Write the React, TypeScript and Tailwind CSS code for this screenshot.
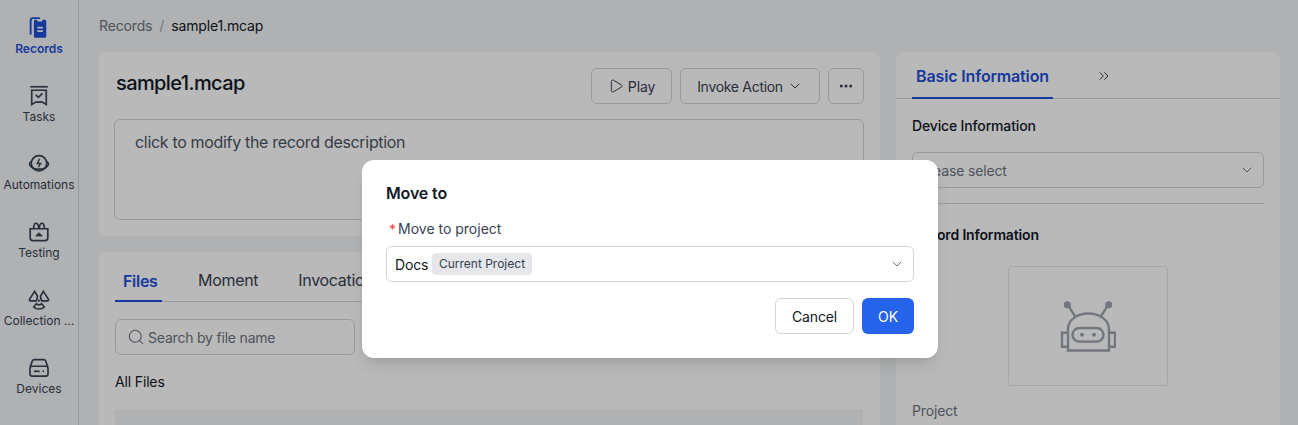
import React from "react";
import { ChevronDown, ChevronsRight, Ellipsis, Play, Search } from "lucide-react";

function RecordsIcon() {
  return (
    <svg width="22" height="22" viewBox="0 0 20 20" fill="none">
      <path d="M2.4 16V3C2.4 1.8 3.2 1 4.4 1H11" stroke="#1d4ed8" strokeWidth="1.7" />
      <path
        d="M5.4 4C5.4 3.2 6 2.6 6.8 2.6H8L8.8 4.2H12.6L13.4 2.6H15C15.9 2.6 16.6 3.2 16.6 4V17.4C16.6 18.2 16 18.8 15.2 18.8H6.8C6 18.8 5.4 18.2 5.4 17.4V4Z"
        fill="#1d4ed8"
      />
      <path d="M8.4 9.6H13.6M8.4 12.8H13.6" stroke="#f3f4f6" strokeWidth="1.5" />
    </svg>
  );
}

function TasksIcon() {
  return (
    <svg width="22" height="22" viewBox="0 0 20 20" fill="none" stroke="#374151" strokeWidth="1.5">
      <path d="M2 1.6H18" />
      <path d="M3.4 4.8H16.6V17.8L13 15.6H7L3.4 17.8V4.8Z" />
      <path d="M7 9L9.4 11.2L13.2 7.6" />
    </svg>
  );
}

function AutomationsIcon() {
  return (
    <svg width="22" height="22" viewBox="0 0 20 20" fill="none" stroke="#374151" strokeWidth="1.5">
      <circle cx="10" cy="9.4" r="7" />
      <path d="M3.4 7.4C1.2 9 0.8 10.6 2.4 12C5.4 15.6 14.6 15.6 17.6 12C19.2 10.6 18.8 9 16.6 7.4" />
      <path d="M10.6 5.2L8.4 9.6H11.4L9.4 12.8" strokeWidth="1.3" />
    </svg>
  );
}

function TestingIcon() {
  return (
    <svg width="22" height="22" viewBox="0 0 20 20" fill="none" stroke="#374151" strokeWidth="1.5">
      <path d="M2 7H18V15.4C18 16.8 17 17.8 15.6 17.8H4.4C3 17.8 2 16.8 2 15.4V7Z" />
      <path d="M5 7L5.6 3.6C5.8 2.6 6.4 2 7.2 2C8 2 8.8 2.6 9.2 3.6L10 7" />
      <path d="M10 7L10.8 3.6C11.2 2.6 12 2 12.8 2C13.6 2 14.2 2.6 14.4 3.6L15 7" />
      <path d="M7 13.6H13L10 10.6L7 13.6Z" fill="#374151" strokeWidth="0.8" />
    </svg>
  );
}

function CollectionIcon() {
  return (
    <svg width="22" height="22" viewBox="0 0 20 20" fill="none" stroke="#374151" strokeWidth="1.5">
      <path d="M6 2.2L1.4 9.4C1.2 10.2 1.6 10.8 2.4 10.8H7.6C8.4 9.2 8.6 8.2 8.6 6.4L6 2.2Z" />
      <path d="M14 2.2L18.6 9.4C18.8 10.2 18.4 10.8 17.6 10.8H12.4C11.6 9.2 11.4 8.2 11.4 6.4L14 2.2Z" />
      <path d="M7.6 13.4C9 14.6 11 14.6 12.4 13.4L14.8 16.4C12 18.6 8 18.6 5.2 16.4L7.6 13.4Z" />
      <circle cx="10" cy="10.6" r="1" fill="#374151" stroke="none" />
    </svg>
  );
}

function DevicesIcon() {
  return (
    <svg width="22" height="22" viewBox="0 0 20 20" fill="none" stroke="#374151" strokeWidth="1.5">
      <path d="M2 9L4 3.4C4.3 2.8 4.8 2.4 5.6 2.4H14.4C15.2 2.4 15.7 2.8 16 3.4L18 9" />
      <rect x="1.8" y="8.4" width="16.4" height="9" rx="2" />
      <path d="M5.4 13H10.6" />
      <path d="M13.2 13H14.6" />
    </svg>
  );
}

function RobotIcon() {
  return (
    <svg width="56" height="56" viewBox="0 0 56 56" fill="none" stroke="#9ca3af" strokeWidth="2.4">
      <circle cx="7.3" cy="6.7" r="3.5" fill="#9ca3af" stroke="none" />
      <circle cx="48.7" cy="6.7" r="3.5" fill="#9ca3af" stroke="none" />
      <path d="M8 7L15.7 19.3M48 7L40.3 19.3" />
      <path d="M8 52.5V31C8 22 17 15.5 28.3 15.5C39.6 15.5 49 22 49 31V52.5H8Z" />
      <rect x="12.5" y="30" width="31" height="13.6" rx="6.8" />
      <circle cx="22" cy="36.8" r="2" fill="#9ca3af" stroke="none" />
      <circle cx="34" cy="36.8" r="2" fill="#9ca3af" stroke="none" />
      <path d="M8 34.8H2V48.7H8M49 34.8H55V48.7H49" />
    </svg>
  );
}

const navItems = [
  { label: "Records", icon: <RecordsIcon />, active: true },
  { label: "Tasks", icon: <TasksIcon /> },
  { label: "Automations", icon: <AutomationsIcon /> },
  { label: "Testing", icon: <TestingIcon /> },
  { label: "Collection ...", icon: <CollectionIcon /> },
  { label: "Devices", icon: <DevicesIcon /> },
];

export default function App() {
  return (
    <div className="relative flex h-screen overflow-hidden bg-[#f3f4f6] font-['Inter',sans-serif] text-[14px] tracking-[-0.15px] text-[#111827]">
      <aside className="flex w-[79px] shrink-0 flex-col items-center border-r border-[#d1d5db] pt-[17px] tracking-normal">
        {navItems.map((item) => (
          <div key={item.label} className="flex h-[68px] w-full flex-col items-center">
            {item.icon}
            <span
              className={`mt-[2px] whitespace-nowrap text-[12px] leading-[16px] ${
                item.active ? "font-semibold text-[#1d4ed8]" : "text-[#374151]"
              }`}
            >
              {item.label}
            </span>
          </div>
        ))}
      </aside>

      <main className="flex-1 pl-5 pr-[18px]">
        <div className="flex h-[52px] items-center gap-[7px] pb-[1px] text-[14px]">
          <span className="text-[#6b7280]">Records</span>
          <span className="text-[#9ca3af]">/</span>
          <span className="text-[#111827]">sample1.mcap</span>
        </div>

        <div className="grid grid-cols-[781px_384px] gap-4">
          <div className="flex flex-col gap-4">
            <section className="h-[184px] rounded-lg bg-white pl-[15px] pr-4 pt-4">
              <div className="flex h-9 items-center justify-between">
                <h1 className="mb-[6px] pl-[2px] text-[20px] font-medium tracking-[-0.6px]">sample1.mcap</h1>
                <div className="flex gap-2">
                  <button className="flex h-9 w-[81px] items-center justify-center gap-1 rounded-md border border-[#d1d5db] text-[#374151]">
                    <Play size={16} strokeWidth={1.5} />
                    Play
                  </button>
                  <button className="flex h-9 w-[140px] items-center justify-center gap-1 rounded-md border border-[#d1d5db] tracking-[-0.3px] text-[#374151]">
                    Invoke Action
                    <ChevronDown size={16} strokeWidth={1.5} />
                  </button>
                  <button className="flex h-9 w-9 items-center justify-center rounded-md border border-[#d1d5db] text-[#374151]">
                    <Ellipsis size={16} strokeWidth={2.5} />
                  </button>
                </div>
              </div>
              <div className="mt-[15px] h-[101px] rounded-md border border-[#d1d5db] px-5 pt-[10px] text-[16px] leading-6 tracking-[-0.32px] text-[#4b5563]">
                click to modify the record description
              </div>
            </section>

            <section className="h-[300px] rounded-lg bg-white px-4">
              <div className="flex h-[50px] items-end border-b border-[#d1d5db] text-[16px] tracking-[-0.3px]">
                <div className="-mb-px w-[47px] border-b-2 border-[#1d4ed8] pb-[7px] pl-2 font-semibold text-[#1d4ed8]">Files</div>
                <div className="-mb-px ml-[36px] pb-[10px] text-[#374151]">Moment</div>
                <div className="-mb-px ml-10 pb-[10px] text-[#374151]">Invocation</div>
              </div>
              <div className="mt-[17px] flex h-9 w-60 items-center gap-[3px] rounded-md border border-[#d1d5db] pl-[11px] text-[#6b7280]">
                <Search size={18} strokeWidth={1.4} />
                <span className="tracking-[-0.2px] text-[#6b7280]">Search by file name</span>
              </div>
              <div className="mt-[17px] leading-5">All Files</div>
              <div className="mr-px mt-[17px] h-12 bg-[#f3f4f6]" />
            </section>
          </div>

          <section className="h-[400px] rounded-lg bg-white">
            <div className="flex h-[47px] items-end border-b border-[#d1d5db] pl-4">
              <div className="-mb-px w-[141px] border-b-2 border-[#1d4ed8] pb-[9px] text-center text-[16px] font-semibold text-[#1d4ed8]">
                Basic Information
              </div>
              <ChevronsRight size={16} strokeWidth={1.5} className="mb-[14px] ml-[43px] text-[#374151]" />
            </div>
            <div className="px-4">
              <div className="mt-[17px] font-medium leading-5">Device Information</div>
              <div className="mt-4 flex h-9 items-center justify-between rounded-md border border-[#d1d5db] pl-2 pr-[15px] text-[#6b7280]">
                Please select
                <ChevronDown size={16} strokeWidth={1.5} className="-mr-[7px]" />
              </div>
              <div className="mt-[15px] border-t border-[#d1d5db]" />
              <div className="mt-[21px] font-semibold leading-5">Record Information</div>
              <div className="mx-auto mt-[21px] flex h-[120px] w-40 items-center justify-center rounded border border-[#e5e7eb]">
                <RobotIcon />
              </div>
              <div className="mt-[15px] leading-5 text-[#6b7280]">Project</div>
            </div>
          </section>
        </div>
      </main>

      <div className="absolute inset-0 flex items-start bg-black/[0.275] pl-[362px] pt-[160px]">
        <div className="h-[198px] w-[576px] rounded-xl bg-white px-6 pt-6 shadow-lg">
          <h2 className="text-[16px] font-semibold leading-[18px]">Move to</h2>
          <div className="mt-[15px] flex items-center leading-5 tracking-normal text-[#374151]">
            <span className="ml-[3px] mr-[2px] mt-[3px] text-[#ef4444]">*</span>
            Move to project
          </div>
          <div className="mt-[6px] flex h-9 items-center justify-between rounded-md border border-[#d1d5db] pl-2 pr-[15px]">
            <div className="flex items-center gap-[5px]">
              <span className="w-[32px] text-[#111827]">Docs</span>
              <span className="flex h-[22px] w-[100px] items-center justify-center rounded bg-[#e5e7eb] text-[12px] tracking-normal text-[#374151]">
                Current Project
              </span>
            </div>
            <ChevronDown size={16} strokeWidth={1.5} className="-mr-[7px] text-[#6b7280]" />
          </div>
          <div className="mt-4 flex justify-end gap-2">
            <button className="h-9 w-[79px] rounded-md border border-[#d1d5db] text-[#111827]">Cancel</button>
            <button className="h-9 w-[52px] rounded-md bg-[#2563eb] text-white">OK</button>
          </div>
        </div>
      </div>
    </div>
  );
}
